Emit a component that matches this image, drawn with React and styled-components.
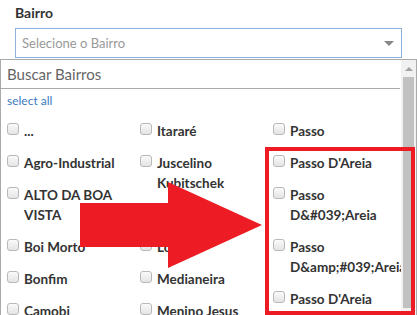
import React from "react";
import styled, { createGlobalStyle } from "styled-components";

const GlobalStyle = createGlobalStyle`
  html, body {
    margin: 0;
    padding: 0;
    background: #fff;
    overflow: hidden;
  }
  body {
    font-family: Lato, "Liberation Sans", sans-serif;
  }
`;

const columns = [
  ["...", "Agro-Industrial", "ALTO DA BOA VISTA", "Boi Morto", "Bonfim", "Camobi"],
  ["Itararé", "Juscelino Kubitschek", "Km 3", "Lorenzi", "Medianeira", "Menino Jesus"],
  ["Passo", "Passo D'Areia", "Passo D&#039;Areia", "Passo D&amp;#039;Areia", "Passo D'Areia"],
];

const App = () => {
  return (
    <Page>
      <GlobalStyle />
      <Field>
        <Label>Bairro</Label>
        <Select>
          <Placeholder>Selecione o Bairro</Placeholder>
          <Caret />
        </Select>
      </Field>

      <Dropdown>
        <Body>
          <Search>Buscar Bairros</Search>
          <SelectAll>select all</SelectAll>
          <Columns>
            {columns.map((col, i) => (
              <Column key={i}>
                {col.map((item, j) => (
                  <Option key={j}>
                    <Box />
                    <OptionText>{item}</OptionText>
                  </Option>
                ))}
              </Column>
            ))}
          </Columns>
        </Body>
        <ScrollBar>
          <UpButton />
          <Thumb />
        </ScrollBar>
      </Dropdown>

      <Highlight />
      <Arrow width="184" height="88" viewBox="0 0 184 88">
        <polygon points="0,21 88,21 88,0 182,43 88,86 88,65 0,65" fill="#ed1c24" />
      </Arrow>
    </Page>
  );
};

const Page = styled.div`
  position: relative;
  width: 417px;
  height: 315px;
  overflow: hidden;
`;

const Field = styled.div`
  padding: 4px 15px 0;
`;

const Label = styled.div`
  font-size: 14px;
  font-weight: 700;
  line-height: 18px;
  color: #333;
  margin-bottom: 6px;
`;

const Select = styled.div`
  display: flex;
  align-items: center;
  justify-content: space-between;
  box-sizing: border-box;
  height: 30px;
  padding: 0 6px 0 6px;
  border: 1px solid #8db0dc;
  background: #fff;
`;

const Placeholder = styled.span`
  font-size: 13px;
  color: #999;
`;

const Caret = styled.span`
  width: 0;
  height: 0;
  margin-right: 1px;
  border-left: 5px solid transparent;
  border-right: 5px solid transparent;
  border-top: 5px solid #888;
`;

const Dropdown = styled.div`
  display: flex;
  margin-top: 1px;
  height: 270px;
  border: 1px solid #aaa;
  background: #fff;
`;

const Body = styled.div`
  flex: 1;
  min-width: 0;
  overflow: hidden;
`;

const Search = styled.div`
  display: flex;
  align-items: center;
  box-sizing: border-box;
  height: 29px;
  margin-right: 1px;
  padding: 0 6px;
  border-bottom: 1px solid #aaa;
  font-size: 15px;
  color: #666;
`;

const SelectAll = styled.div`
  padding: 2px 6px 4px;
  line-height: 20px;
  font-size: 12px;
  color: #3a7bbf;
`;

const Columns = styled.div`
  display: grid;
  grid-template-columns: repeat(3, 133px);
  padding-left: 6px;
`;

const Column = styled.div`
  display: flex;
  flex-direction: column;
  min-width: 0;
`;

const Option = styled.div`
  display: flex;
  align-items: flex-start;
  gap: 5px;
  padding: 6px 0;
  line-height: 20px;
`;

const Box = styled.span`
  flex: none;
  box-sizing: border-box;
  width: 12px;
  height: 12px;
  margin-top: 2px;
  border: 1px solid #b8b8b8;
  border-radius: 3px;
  background: linear-gradient(#fafafa, #e4e4e4);
`;

const OptionText = styled.span`
  font-size: 13.5px;
  font-weight: 700;
  color: #333;
  min-width: 0;
`;

const ScrollBar = styled.div`
  flex: none;
  width: 15px;
  display: flex;
  flex-direction: column;
  align-items: center;
  background: #f1f1f1;
`;

const UpButton = styled.div`
  flex: none;
  height: 17px;
  width: 15px;
  display: flex;
  align-items: center;
  justify-content: center;

  &::before {
    content: "";
    border-left: 4px solid transparent;
    border-right: 4px solid transparent;
    border-bottom: 4px solid #a3a3a3;
  }
`;

const Thumb = styled.div`
  width: 11px;
  height: 231px;
  background: #c1c1c1;
`;

const Highlight = styled.div`
  position: absolute;
  left: 265px;
  top: 147px;
  width: 150px;
  height: 168px;
  box-sizing: border-box;
  border: 4px solid #ed1c24;
`;

const Arrow = styled.svg`
  position: absolute;
  left: 80px;
  top: 182px;
`;

export default App;
